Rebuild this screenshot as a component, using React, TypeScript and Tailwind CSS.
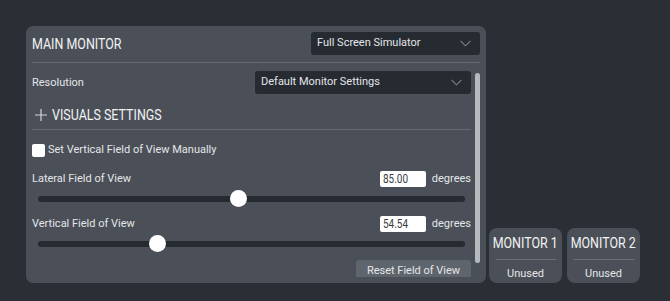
import React from 'react';

// Roboto Condensed is not installed: narrow regular Roboto instead
const narrow = 'inline-block scale-x-[0.83]';

function Chevron() {
  return (
    <svg width="11" height="7" viewBox="0 0 11 7" fill="none" className="shrink-0">
      <path d="M0.5 0.8 L5.5 5.8 L10.5 0.8" stroke="#7d828a" strokeWidth="1.1" />
    </svg>
  );
}

function Select({ label, className }: { label: string; className: string }) {
  return (
    <div className={`flex items-center justify-between h-[23px] rounded-[3px] bg-[#262a31] pl-[6px] pr-[9px] ${className}`}>
      <span className="text-[11px] text-[#e4e6e9]">{label}</span>
      <Chevron />
    </div>
  );
}

const MIN = 10;
const MAX = 170;

function FieldSlider({ label, value, top }: { label: string; value: number; top: string }) {
  const pct = ((value - MIN) / (MAX - MIN)) * 100;
  return (
    <>
      <div className={`flex items-center h-[16px] ${top}`}>
        <span className="text-[11px] text-[#e4e6e9]">{label}</span>
        <div className="ml-auto w-[46px] h-[16px] bg-white rounded-[2px] pl-[3px] flex items-center overflow-hidden">
          <span className={`${narrow} origin-left text-[12px] leading-[14px] text-[#3a3d42]`}>{value.toFixed(2)}</span>
        </div>
        <span className="ml-[6px] text-[11px] text-[#e4e6e9]">degrees</span>
      </div>
      <div className="relative mx-[6px] mt-[3px] h-[17px] flex items-center">
        <div className="w-full h-[6px] rounded-full bg-[#262a31]" />
        <div
          className="absolute top-0 w-[17px] h-[17px] -ml-[8px] rounded-full bg-white"
          style={{ left: `${pct}%` }}
        />
      </div>
    </>
  );
}

function MonitorCard({ name }: { name: string }) {
  return (
    <div className="w-[73px] h-[55px] rounded-[8px] bg-[#4b5058] flex flex-col items-center">
      <div className="mt-[6px] h-[18px] flex justify-center">
        <span className={`${narrow} origin-center whitespace-nowrap text-[15px] leading-[18px] text-[#f1f2f3]`}>{name}</span>
      </div>
      <div className="mt-[7px] w-[60px] h-px bg-[#6b7079]" />
      <div className="mt-[7px] text-[11px] leading-[14px] text-[#e4e6e9]">Unused</div>
    </div>
  );
}

export default function App() {
  return (
    <div className="w-[670px] h-[301px] bg-[#2a2e35] overflow-hidden" style={{ fontFamily: 'Roboto, "Noto Sans", sans-serif' }}>
      <div className="flex items-end pl-[26px] pt-[26px]">
        {/* Main monitor panel */}
        <div className="w-[460px] h-[257px] rounded-[7px] bg-[#4b5058] px-[6px] pt-[6px] flex flex-col">
          <div className="flex items-center justify-between pb-[7px] border-b border-[#666b73]">
            <span className={`${narrow} origin-left translate-y-[1px] text-[15px] text-[#f1f2f3]`}>MAIN MONITOR</span>
            <Select label="Full Screen Simulator" className="w-[169px]" />
          </div>

          {/* Scrolling settings area, content clipped at the bottom */}
          <div className="flex flex-1 min-h-0 pb-[6px]">
            <div className="flex-1 overflow-hidden flex flex-col *:shrink-0">
              <div className="flex items-center justify-between mt-[8px]">
                <span className="translate-y-[1px] text-[11px] text-[#e4e6e9]">Resolution</span>
                <Select label="Default Monitor Settings" className="w-[216px]" />
              </div>

              <div className="flex items-center mt-[11px] h-[20px] pb-[4px] border-b border-[#666b73] box-content">
                <svg width="12" height="12" viewBox="0 0 12 12" className="ml-[3px] shrink-0">
                  <path d="M6 0 V12 M0 6 H12" stroke="#d4d6d9" strokeWidth="1.2" />
                </svg>
                <span className={`${narrow} origin-left ml-[5px] text-[15px] text-[#f1f2f3]`}>VISUALS SETTINGS</span>
              </div>

              <div className="flex items-center mt-[13px] h-[14px]">
                <div className="w-[13px] h-[13px] rounded-[2px] bg-white" />
                <span className="ml-[3px] text-[11px] text-[#e4e6e9]">Set Vertical Field of View Manually</span>
              </div>

              <FieldSlider label="Lateral Field of View" value={85} top="mt-[14px]" />
              <FieldSlider label="Vertical Field of View" value={54.54} top="mt-[9px]" />

              <button className="ml-auto mt-[8px] w-[115px] h-[22px] rounded-[3px] bg-[#5f656d] text-[11px] text-[#e4e6e9]">
                Reset Field of View
              </button>
            </div>
            <div className="w-[5px] ml-[4px] mt-[10px] mb-[14px] rounded-full bg-[#b5babe]" />
          </div>
        </div>

        {/* Secondary monitors */}
        <div className="ml-[3px] flex gap-[5px]">
          <MonitorCard name="MONITOR 1" />
          <MonitorCard name="MONITOR 2" />
        </div>
      </div>
    </div>
  );
}
